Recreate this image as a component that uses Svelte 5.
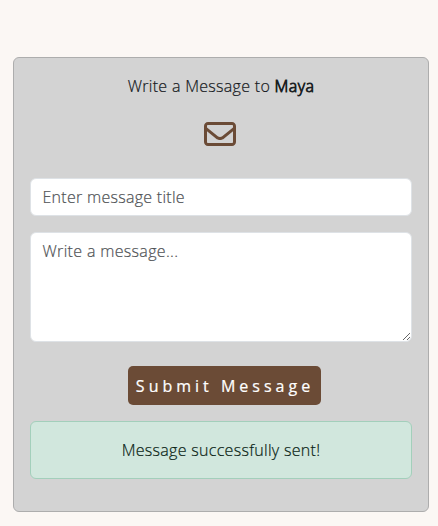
<script>
  let title = $state('');
  let message = $state('');
  const recipient = 'Maya';
</script>

<main>
  <section class="card">
    <p class="heading">Write a Message to <strong>{recipient}</strong></p>
    <svg class="envelope" viewBox="0 0 512 512" aria-hidden="true">
      <path d="M64 112c-8.800 0-16 7.200-16 16v22.100L220.500 291.700c20.700 17 50.400 17 71.100 0L464 150.100V128c0-8.800-7.200-16-16-16H64zM48 212.200V384c0 8.800 7.200 16 16 16H448c8.800 0 16-7.200 16-16V212.200L322 328.800c-38.400 31.500-93.700 31.500-132 0L48 212.200zM0 128C0 92.700 28.700 64 64 64H448c35.300 0 64 28.700 64 64V384c0 35.300-28.700 64-64 64H64c-35.300 0-64-28.700-64-64V128z" />
    </svg>
    <form onsubmit={(e) => e.preventDefault()}>
      <input type="text" placeholder="Enter message title" bind:value={title} />
      <textarea placeholder="Write a message..." bind:value={message}></textarea>
      <button type="submit">Submit Message</button>
    </form>
    <div class="alert" role="alert">Message successfully sent!</div>
  </section>
</main>

<style>
  :global(body) {
    background: #fbf7f4;
  }
  main {
    box-sizing: border-box;
    height: 526px;
    padding: 57px 9px 0 13px;
    font: 300 16px/24px 'Open Sans', sans-serif;
    letter-spacing: 0.3px;
    -webkit-text-stroke-width: 0.2px;
    color: #212529;
  }
  .card {
    box-sizing: border-box;
    height: 455px;
    padding: 16px;
    display: flex;
    flex-direction: column;
    align-items: center;
    background: #d3d3d3;
    border: 1px solid #adadad;
    border-radius: 6px;
  }
  .heading {
    margin: 0;
    color: #15191d;
  }
  strong {
    font-weight: 300;
    letter-spacing: 0.4px;
    -webkit-text-stroke: 0.8px #1b1f23;
  }
  .envelope {
    width: 32px;
    height: 32px;
    margin: 20px 2px 28px 0;
    fill: #6b4b36;
  }
  form {
    width: 100%;
    display: flex;
    flex-direction: column;
    align-items: center;
  }
  input,
  textarea {
    box-sizing: border-box;
    width: 100%;
    margin: 0 0 16px;
    padding: 6px 11.500px;
    font: inherit;
    letter-spacing: 0.28px;
    color: #212529;
    background: #fff;
    border: 1px solid #dee2e6;
    border-radius: 6px;
  }
  input {
    height: 38px;
  }
  textarea {
    height: 110px;
    margin-bottom: 24px;
    letter-spacing: 0.33px;
    resize: vertical;
  }
  ::placeholder {
    color: #212529;
    opacity: 0.8;
  }
  button {
    width: 193px;
    height: 39px;
    margin-left: 7px;
    padding: 0 0 0 1px;
    font: 400 16px/24px 'Open Sans', sans-serif;
    letter-spacing: 4px;
    white-space: nowrap;
    color: #fff;
    background: #6b4b36;
    border: 0;
    border-radius: 5px;
  }
  .alert {
    box-sizing: border-box;
    width: 100%;
    height: 58px;
    margin-top: 16px;
    padding: 16px;
    text-align: center;
    background: #d1e7dd;
    border: 1px solid #a3cfbb;
    border-radius: 6px;
    color: #0a1f15;
  }
</style>
